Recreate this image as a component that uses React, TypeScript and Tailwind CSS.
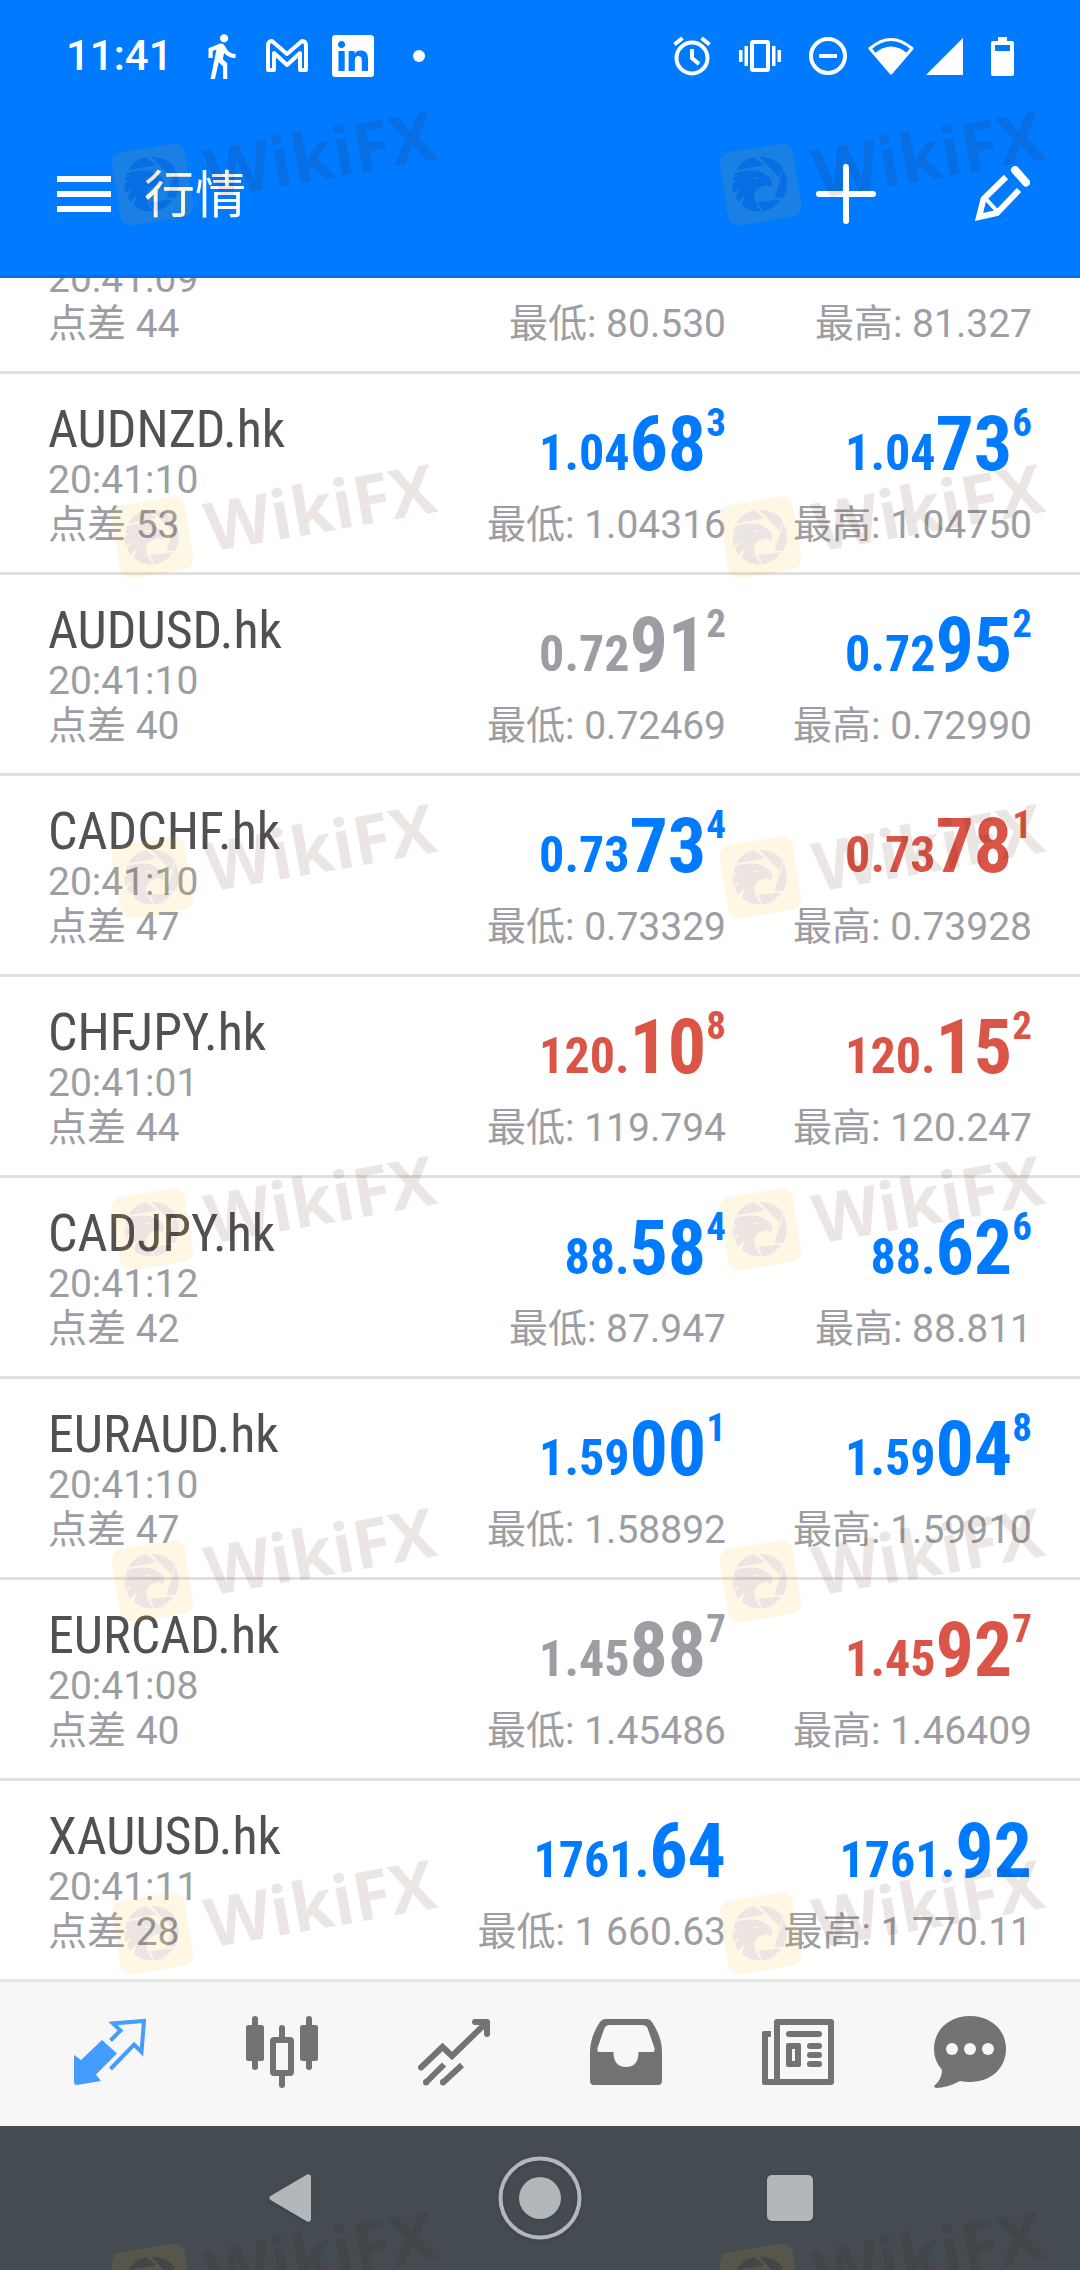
import type { ReactNode } from "react";
import { FaLinkedin } from "react-icons/fa";
import { MdDirectionsWalk } from "react-icons/md";

type Tone = "up" | "down" | "flat";

interface Price {
  small: string;
  big: string;
  sup?: string;
  tone: Tone;
}

interface Quote {
  symbol: string;
  time: string;
  spread: string;
  bid: Price;
  ask: Price;
  low: string;
  high: string;
}

const toneClass: Record<Tone, string> = {
  up: "text-[#007aff]",
  down: "text-[#da5547]",
  flat: "text-[#9d9ea3]",
};

const quotes: Quote[] = [
  { symbol: "AUDNZD.hk", time: "20:41:10", spread: "53", bid: { small: "1.04", big: "68", sup: "3", tone: "up" }, ask: { small: "1.04", big: "73", sup: "6", tone: "up" }, low: "1.04316", high: "1.04750" },
  { symbol: "AUDUSD.hk", time: "20:41:10", spread: "40", bid: { small: "0.72", big: "91", sup: "2", tone: "flat" }, ask: { small: "0.72", big: "95", sup: "2", tone: "up" }, low: "0.72469", high: "0.72990" },
  { symbol: "CADCHF.hk", time: "20:41:10", spread: "47", bid: { small: "0.73", big: "73", sup: "4", tone: "up" }, ask: { small: "0.73", big: "78", sup: "1", tone: "down" }, low: "0.73329", high: "0.73928" },
  { symbol: "CHFJPY.hk", time: "20:41:01", spread: "44", bid: { small: "120.", big: "10", sup: "8", tone: "down" }, ask: { small: "120.", big: "15", sup: "2", tone: "down" }, low: "119.794", high: "120.247" },
  { symbol: "CADJPY.hk", time: "20:41:12", spread: "42", bid: { small: "88.", big: "58", sup: "4", tone: "up" }, ask: { small: "88.", big: "62", sup: "6", tone: "up" }, low: "87.947", high: "88.811" },
  { symbol: "EURAUD.hk", time: "20:41:10", spread: "47", bid: { small: "1.59", big: "00", sup: "1", tone: "up" }, ask: { small: "1.59", big: "04", sup: "8", tone: "up" }, low: "1.58892", high: "1.59910" },
  { symbol: "EURCAD.hk", time: "20:41:08", spread: "40", bid: { small: "1.45", big: "88", sup: "7", tone: "flat" }, ask: { small: "1.45", big: "92", sup: "7", tone: "down" }, low: "1.45486", high: "1.46409" },
  { symbol: "XAUUSD.hk", time: "20:41:11", spread: "28", bid: { small: "1761.", big: "64", tone: "up" }, ask: { small: "1761.", big: "92", tone: "up" }, low: "1 660.63", high: "1 770.11" },
];

function StatusBar() {
  return (
    <div className="flex h-28 items-center justify-between px-[66px] text-white">
      <div className="flex items-center gap-6">
        <span className="w-[110px] font-['Roboto'] text-[42px] leading-none font-medium">11:41</span>
        <MdDirectionsWalk className="-mx-1 size-[50px]" />
        <svg viewBox="0 0 42 34" className="w-[42px]" fill="none" stroke="currentColor" strokeWidth="4" strokeLinejoin="round">
          <path d="M2 7 Q2 2 6 2 L21 15 L36 2 Q40 2 40 7 L40 31 L34 31 L34 14 L21 26 L8 14 L8 31 L2 31 Z" />
        </svg>
        <FaLinkedin className="h-12 w-[42px]" />
        <span className="ml-[15px] size-3 rounded-full bg-white" />
      </div>
      <div className="flex items-center gap-7">
        <svg viewBox="0 0 38 40" className="w-[38px]" fill="none" stroke="currentColor">
          <circle cx="19" cy="22" r="15.5" strokeWidth="4" />
          <path d="M19 13 V22 L26 28" strokeWidth="4" />
          <path d="M1.500 8.500 L9.500 2 M36.500 8.500 L28.500 2" strokeWidth="4" />
        </svg>
        <svg viewBox="0 0 42 32" className="w-[42px]" fill="currentColor">
          <path d="M14 0 H28 Q31 0 31 3 V29 Q31 32 28 32 H14 Q11 32 11 29 V3 Q11 0 14 0 Z M15 4 V28 H27 V4 Z" fillRule="evenodd" />
          <path d="M5.500 6 H9 V26 H5.500 Z M33 6 H36.500 V26 H33 Z M0 10 H3.500 V22 H0 Z M38.500 10 H42 V22 H38.500 Z" />
        </svg>
        <div className="flex items-center gap-[21px]">
          <svg viewBox="0 0 38 38" className="w-[38px]" fill="none" stroke="currentColor" strokeWidth="4">
            <circle cx="19" cy="19" r="17" />
            <path d="M10 19 H28" />
          </svg>
          <div className="flex items-center gap-3">
            <svg viewBox="0 0 46 38" className="w-[46px]" fill="currentColor">
              <path d="M2 11.500 Q23 -6.500 44 11.500 L23 36 Z" fill="none" stroke="currentColor" strokeWidth="3" strokeLinejoin="round" />
              <path d="M7 16 Q23 3 39 16 L23 36 Z" />
            </svg>
            <svg viewBox="0 0 38 38" className="w-[37px]" fill="currentColor">
              <path d="M38 0 V38 H0 Z" />
            </svg>
          </div>
        </div>
        <svg viewBox="0 0 23 39" className="w-[23px]" fill="currentColor">
          <path d="M7 0 H16 V4 H21 Q23 4 23 6 V37 Q23 39 21 39 H2 Q0 39 0 37 V6 Q0 4 2 4 H7 Z M4 8 V14 H19 V8 Z" fillRule="evenodd" />
        </svg>
      </div>
    </div>
  );
}

function Toolbar() {
  return (
    <div className="flex h-[163px] items-center pr-[50px] pl-[57px] text-white">
      <button type="button" aria-label="菜单">
        <svg viewBox="0 0 54 36" className="w-[54px]" fill="currentColor">
          <path d="M0 0 H54 V6 H0 Z M0 15 H54 V21 H0 Z M0 30 H54 V36 H0 Z" />
        </svg>
      </button>
      <h1 className="ml-[33px] flex-1 pt-1 text-[51px] leading-none">行情</h1>
      <button type="button" aria-label="添加">
        <svg viewBox="0 0 60 60" className="w-[60px]" fill="none" stroke="currentColor" strokeWidth="6" strokeLinecap="round">
          <path d="M30 3 V57 M3 30 H57" />
        </svg>
      </button>
      <button type="button" aria-label="编辑" className="ml-[99px]">
        <svg viewBox="0 0 55 55" className="w-[55px]" fill="none" stroke="currentColor" strokeWidth="6">
          <path d="M31 11 L8.500 33 L4 51 L22 47 L44 24" />
          <path d="M11 33 L22 45" strokeWidth="4" />
          <path d="M40 4 L51 16.500" strokeWidth="8" strokeLinecap="round" />
        </svg>
      </button>
    </div>
  );
}

function PriceText({ price }: { price: Price }) {
  return (
    <div className={`flex items-baseline justify-end font-['Roboto_Condensed'] leading-none font-bold ${toneClass[price.tone]}`}>
      <span className="text-[50px]">{price.small}</span>
      <span className="text-[76px] leading-[80px]">{price.big}</span>
      {price.sup && <span className="self-start text-[39px]">{price.sup}</span>}
    </div>
  );
}

function QuoteRow({ quote }: { quote: Quote }) {
  return (
    <li className="flex h-[201px] border-t-3 border-[#e0e0e0] px-12 text-[39px] leading-[45px] text-[#9d9ea3]">
      <div className="flex-1 pt-7">
        <h2 className="font-['Roboto_Condensed'] text-[52px] leading-[56px] text-[#515151]">{quote.symbol}</h2>
        <p>{quote.time}</p>
        <p>点差 {quote.spread}</p>
      </div>
      <div className="w-[306px] pt-[30px] text-right whitespace-nowrap">
        <PriceText price={quote.bid} />
        <p className="mt-[19px]">最低: {quote.low}</p>
      </div>
      <div className="w-[306px] pt-[30px] text-right whitespace-nowrap">
        <PriceText price={quote.ask} />
        <p className="mt-[19px]">最高: {quote.high}</p>
      </div>
    </li>
  );
}

function ScrolledRow() {
  return (
    <li className="flex h-[93px] items-end overflow-hidden px-12 pb-6 text-[39px] leading-[45px] text-[#9d9ea3]">
      <div className="flex-1">
        <p>20:41:09</p>
        <p>点差 44</p>
      </div>
      <p className="w-[306px] text-right">最低: 80.530</p>
      <p className="w-[306px] text-right">最高: 81.327</p>
    </li>
  );
}

const tabs: { label: string; active?: boolean; icon: ReactNode }[] = [
  {
    label: "行情",
    active: true,
    icon: (
      <>
        <path d="M0 39 L7 44 L28 24 L43 37.500 L22 58.500 L27 65 L3 69 Q0 69 0 66 Z" fill="currentColor" />
        <path d="M36.500 24.500 L46.500 14.500 L39 7.500 L70 5 L67.500 36 L60 28.500 L36.500 53" fill="none" stroke="currentColor" strokeWidth="4" />
      </>
    ),
  },
  {
    label: "图表",
    icon: (
      <g fill="currentColor">
        <rect x="0" y="9" width="18" height="36" rx="2.500" />
        <rect x="6" y="0" width="6" height="54" rx="3" />
        <rect x="54" y="9" width="18" height="36" rx="2.500" />
        <rect x="60" y="0" width="6" height="54" rx="3" />
        <rect x="33" y="9" width="6" height="16" rx="3" />
        <rect x="33" y="56" width="6" height="16" rx="3" />
        <rect x="27" y="24" width="18" height="33" rx="1" fill="none" stroke="currentColor" strokeWidth="6" />
      </g>
    ),
  },
  {
    label: "交易",
    icon: (
      <g fill="none" stroke="currentColor" strokeWidth="6">
        <path d="M3 51.500 L24.500 31 L34 40 L68 7" strokeLinecap="round" />
        <path d="M57 6 H69 V18" strokeLinecap="round" strokeLinejoin="round" />
        <path d="M8 66.500 L26 48.500 M25 66.500 L44 49" />
        <path d="M8 66 V66.500 M25 66 V66.500" strokeLinecap="round" />
      </g>
    ),
  },
  {
    label: "收件箱",
    icon: (
      <path
        d="M15 3 H57 Q60 3 62 6 Q72 21 72 36 V65 Q72 69 68 69 H4 Q0 69 0 65 V36 Q0 21 10 6 Q12 3 15 3 Z M20 9 Q16 9 14.500 12 L7.500 32 Q7 36 9 36 H23.500 Q23.500 51 36 51 Q48.500 51 48.500 36 H63 Q65 36 64.500 32 L57.500 12 Q56 9 52 9 Z"
        fill="currentColor"
        fillRule="evenodd"
      />
    ),
  },
  {
    label: "新闻",
    icon: (
      <g fill="currentColor">
        <path d="M15 6 H69 V66 H15 Z" fill="none" stroke="currentColor" strokeWidth="6" strokeLinejoin="round" />
        <path d="M9 15 H2 Q0 15 0 17 V67 Q0 69 2 69 H15 V63 H6 V21 H9 Z" />
        <rect x="24" y="15" width="36" height="6" rx="3" />
        <path d="M26 27 H37 Q39 27 39 29 V49 Q39 51 37 51 H26 Q24 51 24 49 V29 Q24 27 26 27 Z M30 33 V45 H33 V33 Z" fillRule="evenodd" />
        <rect x="45" y="27" width="15" height="6" rx="3" />
        <rect x="45" y="36" width="15" height="6" rx="3" />
        <rect x="45" y="45" width="15" height="6" rx="3" />
      </g>
    ),
  },
  {
    label: "消息",
    icon: (
      <>
        <path d="M36 0 C57 0 72 14 72 33 C72 52 57 66 36 66 Q31 66 26 65 Q13 72 2 72 Q-1 71 1 69 Q8 63 8 54 Q0 45 0 33 C0 14 15 0 36 0 Z" fill="currentColor" />
        <g fill="#f7f7f7">
          <circle cx="18" cy="33" r="6" />
          <circle cx="36" cy="33" r="6" />
          <circle cx="54" cy="33" r="6" />
        </g>
      </>
    ),
  },
];

function TabBar() {
  return (
    <nav className="grid h-[147px] grid-cols-6 border-t-3 border-[#e5e5e5] bg-[#f7f7f7] px-6 pb-1">
      {tabs.map((tab) => (
        <button key={tab.label} type="button" aria-label={tab.label} className={`flex items-center justify-center ${tab.active ? "text-[#449cff]" : "text-[#737373]"}`}>
          <svg viewBox="0 0 72 72" className="size-[72px]">{tab.icon}</svg>
        </button>
      ))}
    </nav>
  );
}

function SystemBar() {
  return (
    <div className="grid h-36 grid-cols-3 items-center justify-items-center bg-[#444c52] px-[165px] text-[#b3b7b9]">
      <button type="button" aria-label="返回">
        <svg viewBox="0 0 42 48" className="w-[42px] drop-shadow-sm" fill="currentColor">
          <path d="M38 .5 Q42 -1 42 4 V44 Q42 49 38 47.500 L1.500 26 Q-1 24 1.500 22 Z" />
        </svg>
      </button>
      <button type="button" aria-label="主屏幕">
        <svg viewBox="0 0 84 84" className="w-[84px] drop-shadow-sm" fill="currentColor">
          <circle cx="42" cy="42" r="39.500" fill="none" stroke="currentColor" strokeWidth="4" />
          <circle cx="42" cy="42" r="21" />
        </svg>
      </button>
      <button type="button" aria-label="最近任务" className="size-[46px] rounded-[5px] bg-[#b3b7b9] shadow-sm" />
    </div>
  );
}

const watermarkRows = [
  "top-[108px]",
  "top-[461px]",
  "top-[801px]",
  "top-[1153px]",
  "top-[1505px]",
  "top-[1857px]",
  "top-[2208px]",
];

function EagleEmblem() {
  return (
    <>
      <path d="M109 121 Q127 88 163 82 L194 106 Z" />
      <path d="M177 80 Q219 80 249 111 L238 143 Z" />
      <path d="M249 119 Q273 162 249 203 L224 204 Z" />
      <path d="M172 217 L243 208 Q223 239 189 244 Z" />
      <path
        d="M106 128 Q145 118 172 123 C188 126 195 134 204 139 Q217 146 216 162 Q214 170 211 173 Q207 164 198 166 C180 170 164 178 162 196 C163 214 172 230 185 244 Q150 247 126 225 Q130 206 136 196 Q120 206 117 216 Q108 206 106 199 Q110 186 122 176 Q106 182 101 190 Q96 176 99 160 Q108 152 118 150 Q106 149 100 152 Q101 138 106 128 Z M156 143 Q166 150 180 147 Q170 142 156 143 Z"
        fillRule="evenodd"
      />
    </>
  );
}

function Watermark({ className }: { className: string }) {
  return (
    <svg viewBox="0 0 330 118" className={`absolute w-[330px] overflow-visible ${className}`}>
      <g transform="translate(-18 22) scale(0.33333)">
        <g mask="url(#eagle-cut)">
          <rect x="70.500" y="52.500" width="222" height="222" rx="33" transform="rotate(-9.400 181.500 163.500)" fill="#f0b408" opacity="0.11" />
        </g>
        <g fill="#4b1300" opacity="0.106">
          <EagleEmblem />
        </g>
      </g>
      <text x="100" y="91" transform="rotate(-10 100 91)" className="font-['Open_Sans'] text-[68px] font-bold" fill="#4b1300" opacity="0.106">
        WikiFX
      </text>
    </svg>
  );
}

function WatermarkLayer() {
  return (
    <div aria-hidden="true" className="pointer-events-none absolute inset-0 overflow-hidden">
      <svg className="absolute size-0">
        <mask id="eagle-cut" maskUnits="userSpaceOnUse" x="0" y="0" width="400" height="400">
          <rect width="400" height="400" fill="white" />
          <g fill="black">
            <EagleEmblem />
          </g>
        </mask>
      </svg>
      {watermarkRows.map((row) => (
        <div key={row} className={`absolute inset-x-0 ${row}`}>
          <Watermark className="left-[110px]" />
          <Watermark className="left-[718px]" />
        </div>
      ))}
    </div>
  );
}

export default function App() {
  return (
    <div className="relative flex min-h-screen flex-col bg-white font-['Roboto','Noto_Sans_CJK_SC',sans-serif]">
      <header className="border-b-3 border-[#0a6fdb] bg-[#007aff]">
        <StatusBar />
        <Toolbar />
      </header>
      <main className="flex-1">
        <ul>
          <ScrolledRow />
          {quotes.map((quote) => (
            <QuoteRow key={quote.symbol} quote={quote} />
          ))}
        </ul>
      </main>
      <TabBar />
      <SystemBar />
      <WatermarkLayer />
    </div>
  );
}
